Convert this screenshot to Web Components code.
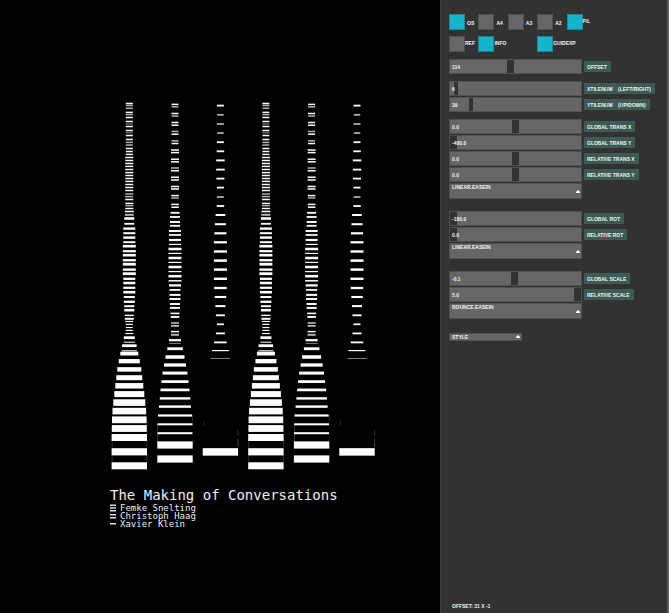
<!DOCTYPE html>
<html lang="en">
<head>
<meta charset="utf-8">
<title>The Making of Conversations</title>
<style>
html, body { margin: 0; min-height: 100vh; background: #000; }
</style>
</head>
<body>
<app-window></app-window>
<script>
function define(name, html, setup) {
  const template = document.createElement('template');
  template.innerHTML = html;
  customElements.define(name, class extends HTMLElement {
    constructor() {
      super();
      this.attachShadow({ mode: 'open' }).append(template.content.cloneNode(true));
    }
    connectedCallback() {
      if (setup) setup(this, this.shadowRoot);
    }
  });
}

// Stripes of each column as [centre y, width, height, opacity].
const W = 1, G = 0.7, D = 0.4;
const thin = (list, w) => list.map(([y, o = W]) => [y, w, 1.5, o]);
const columns = [
  { x: 129.3, bars: [
    ...thin([[103.5],[105.5,G],[108.3,G],[112.4],[114.6,G],[117.5],[121.5],[124,D],[126.5],[130.5],[132.7,D],[135.5],[139.5],[142.4,G],[145,G],[148.5],[151.5],[154.4]], 7),
    ...thin([[157.5],[160.5],[163.5],[166.4],[169.5],[172.6],[175.5],[178.5],[181.4],[184.5],[187.5],[190.5],[194,G],[196.6,G],[199.5],[203.4],[205.6,G],[208.5]], 8),
    [211.5,9,1.5,W],[214.8,9,2,G],[218.5,10,2.6,W],[223.8,10,1.8,W],[228.6,12,2.4,W],[233.2,12,2,W],[237.6,12,2.4,W],[242.2,12,2,W],
    [246.2,13,2.6,W],[251.2,13,2.2,W],[255.2,13,2.6,W],[260.2,13,2.3,W],[264.2,13,2.8,W],[269.6,13,2.4,W],[273.7,13,2.8,W],[278.8,12,2.3,W],[283,12,2.5,W],
    [287.8,12,2.2,W],[292.2,12,2.6,W],[297,11,2,W],[301.8,11,2.3,W],[306.2,10,2,W],[310.2,10,2.6,W],[315.4,9,1.4,W],[318.8,9,2,W],
    [321.5,8,1.2,W],[324.4,7,1.2,W],[327.5,7,1.2,W],[330.4,7,1.2,W],[333.5,8,1.2,W],[337.7,11,2.8,W],[342.2,11,1,W],[345.7,14.5,2.8,W],[350.8,15,1,W],
    [353.6,18,3.8,W],[361.2,21,4.3,W],[369.4,24,4.5,W],[377.7,26,5,W],[385.8,28,5.5,W],[394.1,30,6,W],[402.6,32,6.6,W],[411.1,33.6,6.6,W],
    [419.8,34.6,6.8,W],[428.5,35,6.8,W],[437.5,35.4,7,W],[451.8,35.4,7.2,W],[465.8,35.4,7,W]
  ]},
  { x: 175, bars: [
    ...thin([[104.4],[106.8,G],[113.5],[116,G],[122.5],[125.2],[131.5,G],[134.2],[140.8,G],[143.5]], 7),
    ...thin([[150],[152.6],[159.2],[161.8],[168,G],[170.8],[177.2],[180],[186.5],[189]], 8),
    ...thin([[195.6],[198,G],[204.4],[207.2]], 7.5),
    [212.8,9,1.8,W],[217,10,1.8,W],[222,10,2,W],[225.8,10,1.8,W],[231,12,2,W],[235,12,1.7,W],[240,12,2.2,W],[244.4,12,1.2,W],[249,13,2.5,W],[253.4,13,1.2,W],
    [258,13,2.5,W],[262.4,13,1.2,W],[267,13,2.5,W],[271.6,13,1.2,W],[276.2,13,2.5,W],[280.8,13,1.5,W],[285.4,12,2.3,W],[289.9,11,1.8,W],[294.9,11,2,W],[299,11,2,W],
    [304,10,2,W],[307.9,10,2,W],[313.4,9,1.6,W],[316.9,8.5,2,W],[323,8,1.7,G],[325.9,8,1.3,W],[331.6,8,1.5,W],[334.8,8,2,G],
    [340.2,12,2.2,W],[343.3,12,.7,G],[348.7,15.5,2.8,W],[357,19,3.5,W],[365,22,3.3,W],[373.1,25,3,W],[381.6,27,2.7,W],[389.9,29,2.7,W],
    [398.4,30.5,2.4,W],[406.6,32,2.4,W],[415.5,34,2.2,W],[424.3,35,2,W],[433.2,35,2,W],[445,35.4,7.2,W],[459,35.4,7.2,W]
  ]},
  { x: 220.4, bars: [
    [105.6,7,1.8,W],[114.8,6.5,1.7,G],[124,7,1.7,G],[133,6.5,1.7,G],[142.2,7,1.8,W],[151.3,7.5,1.8,W],[160.4,8.5,1.9,W],[169.6,8.5,1.8,W],
    [178.6,8,1.8,W],[187.6,7,1.8,W],[197,7,1.7,G],[206,7.5,1.8,W],[215,9.7,2,W],[224.2,11,2,W],[233.3,12,2.2,W],[242.3,13,2.3,W],[251.5,13,2.4,W],
    [260.6,13,2.5,W],[269.6,13,2.5,W],[278.8,13,2.4,W],[288,12.4,2.3,W],[297,11.5,2.1,W],[306.1,10,2,W],[315.3,9,1.8,W],[324.3,7,1.7,W],
    [333.4,9,1.8,W],[342.4,12.6,1.8,W],[350.6,17,1.2,W],[358.4,19.5,.7,G],[451.9,35.4,7.5,W]
  ]}
];

define('stripe-figure', `
<style>
:host { display: block; width: 266px; }
svg { display: block; width: 100%; height: auto; }
</style>
<svg viewBox="110 101 266 370" fill="#fff" role="img" aria-label="Six columns of stripes"></svg>
`, (host, root) => {
  const edges = [[111.8,440,8,.25],[146.6,440,7,.25],[111.8,455,7,.25],[146.6,455,7,.25],[157.4,424,18,.25],[192.3,415,6,.25],[203.4,421,5,.2],[237.6,430,6,.25],[237.6,439,8,.35]];
  let out = '';
  for (const shift of [0, 136.6]) {
    for (const col of columns)
      for (const [y, w, h, o] of col.bars)
        out += `<rect x="${(col.x + shift - w / 2).toFixed(1)}" y="${(y - h / 2).toFixed(2)}" width="${w}" height="${h}" opacity="${o}"/>`;
    for (const [x, y, h, o] of edges)
      out += `<rect x="${x + shift}" y="${y}" width=".7" height="${h}" opacity="${o}"/>`;
  }
  root.querySelector('svg').innerHTML = out;
});

define('author-line', `
<style>
:host { display: flex; align-items: center; gap: 4px; height: 8px; font-size: 9px; line-height: 8px; }
svg { width: 6px; height: 8px; flex: none; }
</style>
<svg viewBox="0 0 6 8" aria-hidden="true"></svg><span><slot></slot></span>
`, (host, root) => {
  const rows = { 1: [3], 2: [2, 5], 3: [0.5, 3.2, 6] }[host.getAttribute('bars')];
  root.querySelector('svg').innerHTML = rows.map(y => `<rect y="${y}" width="6" height="1.5" fill="#ddd"/>`).join('');
});

define('poster-view', `
<style>
:host { display: block; padding: 101px 0 0 110px; background: #000; color: #eee; font-family: "DejaVu Sans Mono", monospace; }
h1 { margin: 16px 0 1px; font-size: 14px; line-height: 16px; font-weight: 400; white-space: nowrap; }
</style>
<stripe-figure></stripe-figure>
<h1>The Making of Conversations</h1>
<author-line bars="3">Femke Snelting</author-line>
<author-line bars="2">Christoph Haag</author-line>
<author-line bars="1">Xavier Klein</author-line>
`);

define('toggle-box', `
<style>
:host { display: block; }
label { display: flex; align-items: flex-start; gap: 2px; white-space: nowrap; }
input { appearance: none; flex: none; box-sizing: border-box; width: 16px; height: 16px; margin: 0; background: #666; border: 1px solid #505050; }
input:checked { background: #12b5c9; border-color: #1f8793; }
span { padding-top: 6px; line-height: 6px; }
:host([tight]) label { gap: 0; }
:host([tight]) span { padding-top: 4px; }
</style>
<label><input type="checkbox"><span><slot></slot></span></label>
`, (host, root) => { root.querySelector('input').checked = host.hasAttribute('on'); });

define('slider-row', `
<style>
:host { display: grid; grid-template-columns: 133px 1fr; column-gap: 2px; height: 15px; --thumb: 7px; }
:host([fine]) { --thumb: 4px; }
.field { display: grid; }
input, output { grid-area: 1 / 1; }
input { appearance: none; box-sizing: border-box; width: 100%; height: 15px; margin: 0; background: #666; border: 1px solid #505050; }
input::-webkit-slider-thumb { appearance: none; width: var(--thumb); height: 13px; background: #323232; border: 0; }
output { padding: 5px 0 0 3px; line-height: 6px; pointer-events: none; z-index: 1; }
label { justify-self: start; box-sizing: border-box; height: 11px; margin-top: 2px; padding: 3px 4px 0 3px; line-height: 6px; background: #3a5c54; white-space: pre; }
</style>
<div class="field"><input id="range" type="range" min="0" max="1000"><output for="range"></output></div>
<label for="range"><slot></slot></label>
`, (host, root) => {
  root.querySelector('input').value = host.getAttribute('at');
  root.querySelector('output').textContent = host.getAttribute('value');
});

define('drop-list', `
<style>
:host { display: grid; width: 133px; height: 16px; --bottom: 8px; }
:host([small]) { width: 73px; height: 8px; --bottom: 0; }
select, svg { grid-area: 1 / 1; }
select { appearance: none; box-sizing: border-box; width: 100%; height: 100%; margin: 0; padding: 0 0 var(--bottom) 2px; background: #666; border: 1px solid #505050; border-radius: 0; color: inherit; font: inherit; line-height: 6px; }
svg { align-self: end; justify-self: end; width: 4px; height: 3px; margin: 0 2px 6px 0; pointer-events: none; }
:host([small]) svg { margin-bottom: 3px; }
</style>
<select><option></option></select>
<svg viewBox="0 0 4 3" fill="#fff" aria-hidden="true"><path d="M2 0 4 2V3H0V2z"/></svg>
`, (host, root) => {
  root.querySelector('option').textContent = host.getAttribute('value');
  root.querySelector('select').setAttribute('aria-label', host.getAttribute('name'));
});

define('control-panel', `
<style>
:host { display: flex; flex-direction: column; box-sizing: border-box; padding: 14px 0 3px 8px; background: #323232; border-left: 1px solid #3d3d3d; border-right: 2px solid #5e5e5e; color: #f2f2f2; font: 700 5px "Liberation Sans", sans-serif; }
.toggles { display: grid; grid-template-columns: repeat(5, minmax(0, 1fr)); width: 147px; row-gap: 6px; }
.toggles :nth-child(8) { grid-column: 4; }
.group { display: grid; row-gap: 1px; margin-top: 7px; }
.group.apart { margin-top: 12px; }
.style { margin-top: 14px; }
footer { margin-top: auto; padding-left: 3px; line-height: 8px; }
</style>
<div class="toggles">
  <toggle-box on>OS</toggle-box><toggle-box>A4</toggle-box><toggle-box>A3</toggle-box><toggle-box>A2</toggle-box><toggle-box on tight>P/L</toggle-box>
  <toggle-box tight>REF</toggle-box><toggle-box on tight>INFO</toggle-box><toggle-box on tight>GUIDEXP</toggle-box>
</div>
<div class="group"><slider-row at="460" value="114">OFFSET</slider-row></div>
<div class="group">
  <slider-row fine at="28" value="6">XTILENUM    (LEFT/RIGHT)</slider-row>
  <slider-row fine at="150" value="39">YTILENUM    (UP/DOWN)</slider-row>
</div>
<div class="group">
  <slider-row at="500" value="0.0">GLOBAL TRANS X</slider-row>
  <slider-row at="0" value="-400.0">GLOBAL TRANS Y</slider-row>
  <slider-row at="500" value="0.0">RELATIVE TRANS X</slider-row>
  <slider-row at="500" value="0.0">RELATIVE TRANS Y</slider-row>
  <drop-list name="Translation easing" value="LINEAR.EASEIN"></drop-list>
</div>
<div class="group apart">
  <slider-row at="0" value="-180.0">GLOBAL ROT</slider-row>
  <slider-row at="0" value="0.0">RELATIVE ROT</slider-row>
  <drop-list name="Rotation easing" value="LINEAR.EASEIN"></drop-list>
</div>
<div class="group apart">
  <slider-row at="488" value="-0.1">GLOBAL SCALE</slider-row>
  <slider-row at="1000" value="5.0">RELATIVE SCALE</slider-row>
  <drop-list name="Scale easing" value="BOUNCE.EASEIN"></drop-list>
</div>
<drop-list class="style" small name="Style" value="STYLE"></drop-list>
<footer>OFFSET: 31 X -1</footer>
`);

define('app-window', `
<style>
:host { display: grid; grid-template-columns: 1fr 229px; min-height: 100vh; }
</style>
<poster-view></poster-view>
<control-panel></control-panel>
`);
</script>
</body>
</html>
